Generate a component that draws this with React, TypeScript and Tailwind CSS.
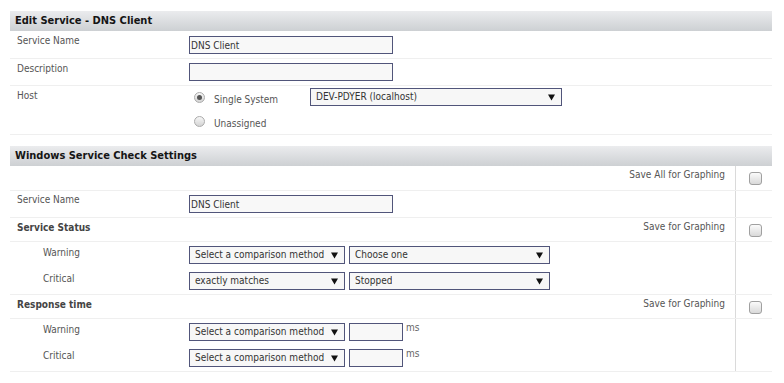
import React from 'react'

const Arrow = () => (
  <svg width="7" height="7" viewBox="0 0 7 7" className="shrink-0">
    <path d="M0 0.5 H7 L3.5 6.5 Z" fill="#111" />
  </svg>
)

function SelectBox({ value, width }: { value: string; width: string }) {
  return (
    <div className={`${width} h-[18px] border border-[#51557a] bg-[#f7f7f7] flex items-center justify-between pl-[5px] pr-[6px] text-[#333]`}>
      <span className="truncate">{value}</span>
      <Arrow />
    </div>
  )
}

function TextBox({ value = '', width }: { value?: string; width: string }) {
  return (
    <input
      readOnly
      value={value}
      className={`${width} h-[18px] border border-[#51557a] bg-[#f8f8f8] px-[1px] text-[#333] outline-none`}
    />
  )
}

const Radio = ({ checked }: { checked?: boolean }) => (
  <div className="w-[11px] h-[11px] rounded-full border border-[#ababab] bg-linear-to-b from-[#f7f7f7] to-[#d4d4d4] flex items-center justify-center shrink-0">
    {checked && <div className="w-[5px] h-[5px] rounded-full bg-[#555]" />}
  </div>
)

const Checkbox = () => (
  <div className="w-[13px] h-[13px] rounded-[3px] border border-[#a0a0a0] bg-linear-to-b from-[#fbfbfb] to-[#d9d9d9]" />
)

const Header = ({ title }: { title: string }) => (
  <div className="h-[20px] bg-linear-to-b from-[#ebecee] to-[#cdd0d3] flex items-center pl-[5px] text-[11px] font-bold text-[#151515]">
    {title}
  </div>
)

// section 2 row: main area with right divider, then the checkbox column
function CheckRow({
  height,
  children,
  graph,
}: {
  height: string
  children?: React.ReactNode
  graph?: string
}) {
  return (
    <div className={`flex ${height} border-b border-[#efefef]`}>
      <div className="w-[726px] border-r border-[#dadada] flex">
        <div className="flex-1">{children}</div>
        {graph && <div className="pr-[10px] pt-[3px] text-[#555]">{graph}</div>}
      </div>
      <div className="flex-1 pl-[13px] pt-[6px]">{graph && <Checkbox />}</div>
    </div>
  )
}

export default function App() {
  return (
    <div className="min-h-screen bg-white pt-[11px] pl-[10px] font-['DejaVu_Sans_Condensed','DejaVu_Sans',sans-serif] [font-stretch:condensed] text-[10px] leading-[12px]">
      <div className="w-[762px]">
        <Header title="Edit Service - DNS Client" />

        <div className="flex h-[28px] border-b border-[#efefef]">
          <div className="w-[179px] pl-[7px] pt-[4px] text-[#555]">Service Name</div>
          <div className="pt-[5px]"><TextBox value="DNS Client" width="w-[204px]" /></div>
        </div>
        <div className="flex h-[27px] border-b border-[#efefef]">
          <div className="w-[179px] pl-[7px] pt-[4px] text-[#555]">Description</div>
          <div className="pt-[4px]"><TextBox width="w-[204px]" /></div>
        </div>
        <div className="flex h-[49px] border-b border-[#efefef]">
          <div className="w-[179px] pl-[7px] pt-[4px] text-[#555]">Host</div>
          <div className="pt-[2px]">
            <div className="flex items-center h-[18px]">
              <div className="w-[121px] flex items-center pl-[5px]">
                <Radio checked />
                <span className="ml-[9px] pt-[5px] text-[#555]">Single System</span>
              </div>
              <SelectBox value="DEV-PDYER (localhost)" width="w-[252px]" />
            </div>
            <div className="flex items-center h-[18px] mt-[6px] pl-[5px]">
              <Radio />
              <span className="ml-[9px] pt-[5px] text-[#555]">Unassigned</span>
            </div>
          </div>
        </div>

        <div className="h-[11px]" />
        <Header title="Windows Service Check Settings" />

        <CheckRow height="h-[25px]" graph="Save All for Graphing" />
        <CheckRow height="h-[27px]">
          <div className="flex">
            <div className="w-[179px] pl-[7px] pt-[3px] text-[#555]">Service Name</div>
            <div className="pt-[4px]"><TextBox value="DNS Client" width="w-[204px]" /></div>
          </div>
        </CheckRow>
        <CheckRow height="h-[24px]" graph="Save for Graphing">
          <div className="pl-[7px] pt-[4px] font-bold text-[#444]">Service Status</div>
        </CheckRow>
        <CheckRow height="h-[53px]">
          <div className="pt-[4px] flex flex-col gap-[8px]">
            <div className="flex">
              <div className="w-[179px] pl-[33px] pt-[1px] text-[#555]">Warning</div>
              <SelectBox value="Select a comparison method" width="w-[156px]" />
              <div className="ml-[4px]"><SelectBox value="Choose one" width="w-[201px]" /></div>
            </div>
            <div className="flex">
              <div className="w-[179px] pl-[33px] pt-[1px] text-[#555]">Critical</div>
              <SelectBox value="exactly matches" width="w-[156px]" />
              <div className="ml-[4px]"><SelectBox value="Stopped" width="w-[201px]" /></div>
            </div>
          </div>
        </CheckRow>
        <CheckRow height="h-[24px]" graph="Save for Graphing">
          <div className="pl-[7px] pt-[4px] font-bold text-[#444]">Response time</div>
        </CheckRow>
        <CheckRow height="h-[53px]">
          <div className="pt-[4px] flex flex-col gap-[8px]">
            {['Warning', 'Critical'].map((l) => (
              <div key={l} className="flex">
                <div className="w-[179px] pl-[33px] pt-[1px] text-[#555]">{l}</div>
                <SelectBox value="Select a comparison method" width="w-[156px]" />
                <div className="ml-[4px]"><TextBox width="w-[54px]" /></div>
                <span className="ml-[3px] mt-[-1px] text-[#666]">ms</span>
              </div>
            ))}
          </div>
        </CheckRow>
      </div>
    </div>
  )
}
